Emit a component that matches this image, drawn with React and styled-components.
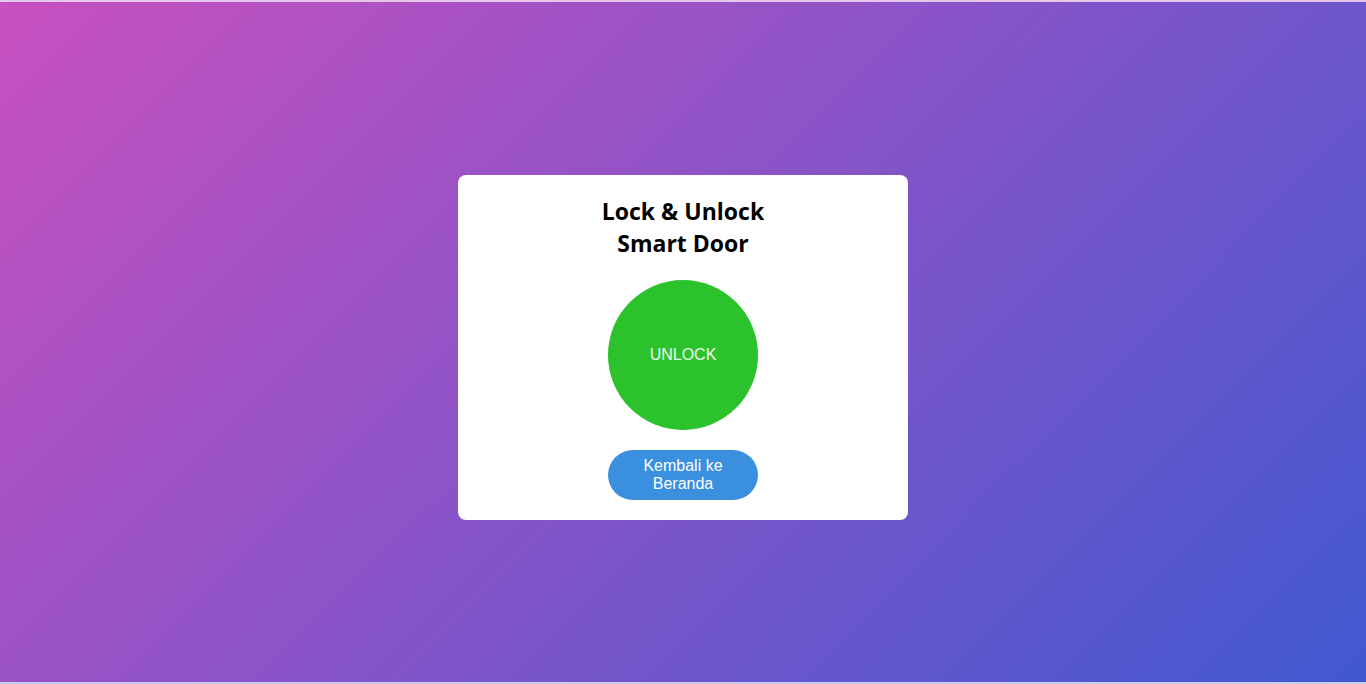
import React from 'react';
import styled, { createGlobalStyle } from 'styled-components';

const GlobalStyle = createGlobalStyle`
  html, body {
    margin: 0;
    padding: 0;
    height: 100%;
  }
  body {
    font-family: "Liberation Sans", Arial, sans-serif;
  }
  #root {
    height: 100%;
  }
`;

const Page = styled.div`
  height: 100vh;
  display: flex;
  align-items: center;
  justify-content: center;
  background: linear-gradient(135deg, #c850c0 0%, #4158d0 100%);
  box-sizing: border-box;
  padding-top: 10px;
  border-top: 2px solid #e6c6ea;
  border-bottom: 2px solid #c9cdf0;
`;

const Card = styled.div`
  width: 450px;
  box-sizing: border-box;
  padding: 20px;
  background: #ffffff;
  border-radius: 8px;
  display: flex;
  flex-direction: column;
  align-items: center;
  gap: 20px;
`;

const Title = styled.h2`
  margin: 0;
  font-family: "Open Sans", Lato, sans-serif;
  font-weight: 700;
  font-size: 23px;
  line-height: 32px;
  height: 65px;
  color: #000;
  text-align: center;
`;

const ToggleButton = styled.button`
  width: 150px;
  height: 150px;
  border: none;
  border-radius: 50%;
  background: ${(props) => (props.locked ? '#e53935' : '#2bc22b')};
  color: #eef8ee;
  font-family: "Liberation Sans", Arial, sans-serif;
  font-size: 16px;
  cursor: pointer;
`;

const HomeButton = styled.button`
  width: 150px;
  height: 50px;
  border: none;
  border-radius: 25px;
  background: #3a90df;
  color: #ffffff;
  font-family: "Liberation Sans", Arial, sans-serif;
  font-size: 16px;
  line-height: 18px;
  padding: 0 24px;
  cursor: pointer;
`;

export default function App() {
  const [locked, setLocked] = React.useState(false);
  return (
    <>
      <GlobalStyle />
      <Page>
        <Card>
          <Title>
            Lock &amp; Unlock
            <br />
            Smart Door
          </Title>
          <ToggleButton locked={locked} onClick={() => setLocked(!locked)}>
            {locked ? 'LOCK' : 'UNLOCK'}
          </ToggleButton>
          <HomeButton>Kembali ke Beranda</HomeButton>
        </Card>
      </Page>
    </>
  );
}
